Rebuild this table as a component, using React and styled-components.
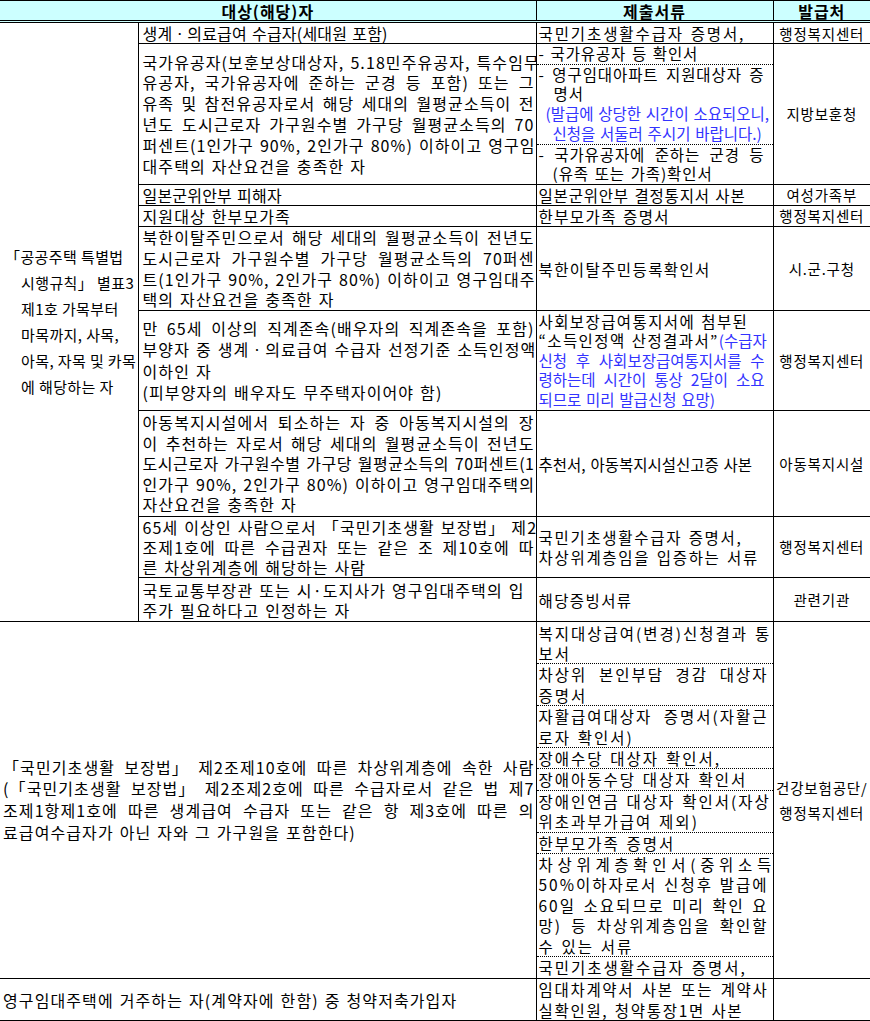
import React from "react";
import styled, { createGlobalStyle } from "styled-components";

const GlobalStyle = createGlobalStyle`
  * { box-sizing: border-box; }
  html, body { margin: 0; padding: 0; background: #ffffff; }
  body {
    font-family: "Noto Sans CJK KR", "Noto Sans", sans-serif;
    color: #000000;
  }
`;

const Sheet = styled.table`
  width: 870px;
  border-collapse: collapse;
  table-layout: fixed;
  word-spacing: 1.3px;
`;

const Col = styled.col`
  width: ${({ $w }) => $w}px;
`;

const HeadRow = styled.tr`
  height: 21px;
`;

const HeadCell = styled.th`
  padding: 0;
  background: #ccffff;
  border: 1px solid #000;
  border-bottom: 3px double #000;
  font-size: 16px;
  font-weight: 700;
  letter-spacing: 1px;
  line-height: 18px;
  text-align: center;
  &:first-child { border-left: none; }
  &:last-child { border-right: none; }
`;

const Row = styled.tr`
  height: ${({ $h }) => $h}px;
`;

const Cell = styled.td`
  padding: 0;
  border: 1px solid #000;
  vertical-align: middle;
`;

// 왼쪽 묶음 칸 (별표3 해당자)
const TargetCell = styled(Cell)`
  border-left: none;
  padding-left: 21px;
  font-size: 15px;
  letter-spacing: 0.4px;
  word-spacing: 0;
  line-height: 26px;
`;

const TargetLine = styled.div`
  white-space: nowrap;
  ${({ $hang }) => $hang && "margin-left: -16px;"}
`;

const CondCell = styled(Cell)`
  padding: 0 1px 0 ${({ $wide }) => ($wide ? 3 : 4)}px;
  font-size: 16px;
  letter-spacing: 1.1px;
  line-height: ${({ $lh }) => $lh || 20}px;
  ${({ $wide }) => $wide && "border-left: none;"}
`;

const DocCell = styled(Cell)`
  font-size: 15.5px;
  letter-spacing: ${({ $ls }) => $ls ?? 1.4}px;
  line-height: ${({ $lh }) => $lh || 20}px;
`;

const DocBlock = styled.div`
  padding: 0 ${({ $padR }) => $padR || 4}px 0 2px;
  & + & { border-top: 1px dotted #000; }
`;

const IssuerCell = styled(Cell)`
  border-right: none;
  font-size: 14.5px;
  letter-spacing: 0.8px;
  line-height: ${({ $lh }) => $lh || 20}px;
  text-align: center;
`;

const Line = styled.div`
  white-space: nowrap;
  padding-left: ${({ $indent }) => $indent || 0}px;
  text-align: ${({ $fill }) => ($fill ? "justify" : "left")};
  text-align-last: ${({ $fill }) => ($fill ? "justify" : "left")};
  ${({ $spread }) => $spread != null && `letter-spacing: ${$spread}px;`}
`;

const Note = styled.span`
  color: #3333ff;
  letter-spacing: 0;
`;

// 낫표: 양쪽 정렬 때 앞뒤로 벌어지지 않게 묶어 둔다
const Bracket = styled.span`
  display: inline-block;
  font-family: "Noto Sans CJK JP", "Noto Sans CJK KR", sans-serif;
`;

const withBrackets = (text) =>
  typeof text !== "string"
    ? text
    : text.split(/([「」])/).map((part, i) =>
        part === "「" || part === "」" ? <Bracket key={i}>{part}</Bracket> : part
      );

// 마지막 줄만 빼고 양쪽 정렬
const Lines = ({ items }) =>
  items.map((item, i) => {
    const line = typeof item === "string" || React.isValidElement(item) ? { t: item } : item;
    const fill = !line.plain && i < items.length - 1;
    return (
      <Line key={i} $fill={fill} $indent={line.indent} $spread={line.spread}>
        {withBrackets(line.t)}
      </Line>
    );
  });

const rows = [
  {
    h: 22,
    condLh: 19,
    cond: [{ t: "생계ㆍ의료급여 수급자(세대원 포함)", spread: 0.2 }],
    docs: [["국민기초생활수급자 증명서,"]],
    ls: 1.9,
    lh: 19,
    issuerLh: 19,
    issuer: "행정복지센터",
  },
  {
    h: 141,
    condLh: 20.8,
    cond: [
      "국가유공자(보훈보상대상자, 5.18민주유공자, 특수임무",
      "유공자, 국가유공자에 준하는 군경 등 포함) 또는 그",
      "유족 및 참전유공자로서 해당 세대의 월평균소득이 전",
      "년도 도시근로자 가구원수별 가구당 월평균소득의 70",
      "퍼센트(1인가구 90%, 2인가구 80%) 이하이고 영구임",
      "대주택의 자산요건을 충족한 자",
    ],
    docs: [
      ["- 국가유공자 등 확인서"],
      [
        "- 영구임대아파트 지원대상자 증",
        { t: "명서", indent: 15, plain: true },
        { t: <Note>(발급에 상당한 시간이 소요되오니,</Note>, indent: 7, plain: true },
        { t: <Note>신청을 서둘러 주시기 바랍니다.)</Note>, indent: 14 },
      ],
      ["- 국가유공자에 준하는 군경 등", { t: "(유족 또는 가족)확인서", indent: 14 }],
    ],
    ls: 0.9,
    lh: 19.7,
    padR: 8,
    issuer: "지방보훈청",
  },
  {
    h: 21,
    cond: [{ t: "일본군위안부 피해자", spread: 0.2 }],
    docs: [["일본군위안부 결정통지서 사본"]],
    ls: 0.8,
    issuer: "여성가족부",
  },
  {
    h: 21,
    cond: ["지원대상 한부모가족"],
    docs: [["한부모가족 증명서"]],
    issuer: "행정복지센터",
  },
  {
    h: 84,
    condLh: 20.7,
    cond: [
      "북한이탈주민으로서 해당 세대의 월평균소득이 전년도",
      "도시근로자 가구원수별 가구당 월평균소득의 70퍼센",
      "트(1인가구 90%, 2인가구 80%) 이하이고 영구임대주",
      "택의 자산요건을 충족한 자",
    ],
    docs: [["북한이탈주민등록확인서"]],
    issuer: "시.군.구청",
  },
  {
    h: 100,
    condLh: 21.5,
    cond: [
      "만 65세 이상의 직계존속(배우자의 직계존속을 포함)",
      "부양자 중 생계ㆍ의료급여 수급자 선정기준 소득인정액",
      { t: "이하인 자", plain: true },
      "(피부양자의 배우자도 무주택자이어야 함)",
    ],
    docs: [
      [
        { t: "사회보장급여통지서에 첨부된", plain: true },
        <>
          “소득인정액 산정결과서”<Note>(수급자</Note>
        </>,
        <Note>신청 후 사회보장급여통지서를 수</Note>,
        <Note>령하는데 시간이 통상 2달이 소요</Note>,
        <Note>되므로 미리 발급신청 요망)</Note>,
      ],
    ],
    lh: 19.6,
    padR: 8,
    issuer: "행정복지센터",
  },
  {
    h: 106,
    condLh: 20.6,
    cond: [
      "아동복지시설에서 퇴소하는 자 중 아동복지시설의 장",
      "이 추천하는 자로서 해당 세대의 월평균소득이 전년도",
      { t: "도시근로자 가구원수별 가구당 월평균소득의 70퍼센트(1", spread: 0.5 },
      "인가구 90%, 2인가구 80%) 이하이고 영구임대주택의",
      "자산요건을 충족한 자",
    ],
    docs: [["추천서, 아동복지시설신고증 사본"]],
    ls: 0,
    issuer: "아동복지시설",
  },
  {
    h: 61,
    cond: [
      "65세 이상인 사람으로서 「국민기초생활 보장법」 제2",
      "조제1호에 따른 수급권자 또는 같은 조 제10호에 따",
      "른 차상위계층에 해당하는 사람",
    ],
    docs: [[{ t: "국민기초생활수급자 증명서,", plain: true }, "차상위계층임을 입증하는 서류"]],
    ls: 1.7,
    issuer: "행정복지센터",
  },
  {
    h: 44,
    cond: [
      { t: "국토교통부장관 또는 시·도지사가 영구임대주택의 입", plain: true },
      "주가 필요하다고 인정하는 자",
    ],
    docs: [["해당증빙서류"]],
    issuer: "관련기관",
  },
];

const welfareDocs = [
  ["복지대상급여(변경)신청결과 통", "보서"],
  ["차상위 본인부담 경감 대상자", "증명서"],
  ["자활급여대상자 증명서(자활근", "로자 확인서)"],
  ["장애수당 대상자 확인서,"],
  ["장애아동수당 대상자 확인서"],
  ["장애인연금 대상자 확인서(자상", "위초과부가급여 제외)"],
  ["한부모가족 증명서"],
  [
    { t: "차상위계층확인서(중위소득", spread: 4.7 },
    "50%이하자로서 신청후 발급에",
    "60일 소요되므로 미리 확인 요",
    "망) 등 차상위계층임을 확인할",
    "수 있는 서류",
  ],
  ["국민기초생활수급자 증명서,"],
];

const App = () => (
  <>
    <GlobalStyle />
    <Sheet>
      <colgroup>
        <Col $w={138} />
        <Col $w={398} />
        <Col $w={237} />
        <Col $w={97} />
      </colgroup>
      <tbody>
        <HeadRow>
          <HeadCell colSpan={2}>대상(해당)자</HeadCell>
          <HeadCell>제출서류</HeadCell>
          <HeadCell>발급처</HeadCell>
        </HeadRow>

        {rows.map((row, i) => (
          <Row key={i} $h={row.h}>
            {i === 0 && (
              <TargetCell rowSpan={rows.length}>
                <TargetLine $hang>{withBrackets("「공공주택 특별법")}</TargetLine>
                <TargetLine>{withBrackets("시행규칙」 별표3")}</TargetLine>
                <TargetLine>제1호 가목부터</TargetLine>
                <TargetLine>마목까지, 사목,</TargetLine>
                <TargetLine>아목, 자목 및 카목</TargetLine>
                <TargetLine>에 해당하는 자</TargetLine>
              </TargetCell>
            )}
            <CondCell $lh={row.condLh}>
              <Lines items={row.cond} />
            </CondCell>
            <DocCell $ls={row.ls} $lh={row.lh}>
              {row.docs.map((block, j) => (
                <DocBlock key={j} $padR={row.padR}>
                  <Lines items={block} />
                </DocBlock>
              ))}
            </DocCell>
            <IssuerCell $lh={row.issuerLh}>{row.issuer}</IssuerCell>
          </Row>
        ))}

        <Row $h={357}>
          <CondCell colSpan={2} $wide $lh={21.7}>
            <Lines
              items={[
                "「국민기초생활 보장법」 제2조제10호에 따른 차상위계층에 속한 사람",
                "(「국민기초생활 보장법」 제2조제2호에 따른 수급자로서 같은 법 제7",
                "조제1항제1호에 따른 생계급여 수급자 또는 같은 항 제3호에 따른 의",
                "료급여수급자가 아닌 자와 그 가구원을 포함한다)",
              ]}
            />
          </CondCell>
          <DocCell $ls={2} $lh={20.4}>
            {welfareDocs.map((block, j) => (
              <DocBlock key={j}>
                <Lines items={block} />
              </DocBlock>
            ))}
          </DocCell>
          <IssuerCell $lh={25}>
            건강보험공단/
            <br />
            행정복지센터
          </IssuerCell>
        </Row>

        <Row $h={42}>
          <CondCell colSpan={2} $wide>
            <Lines items={["영구임대주택에 거주하는 자(계약자에 한함) 중 청약저축가입자"]} />
          </CondCell>
          <DocCell $ls={1.7} $lh={20.4}>
            <DocBlock>
              <Lines items={["임대차계약서 사본 또는 계약사", "실확인원, 청약통장1면 사본"]} />
            </DocBlock>
          </DocCell>
          <IssuerCell />
        </Row>
      </tbody>
    </Sheet>
  </>
);

export default App;
